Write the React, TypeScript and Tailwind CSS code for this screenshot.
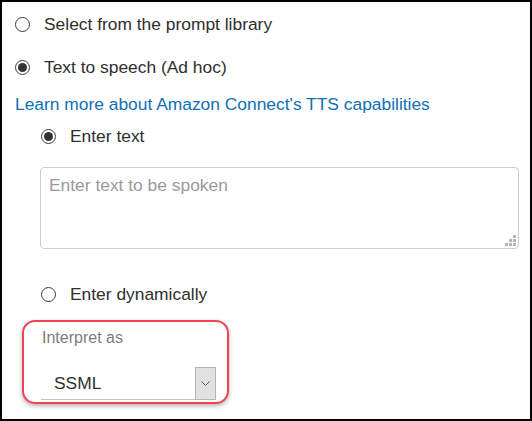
import * as React from "react";

/**
 * PromptSource — radio choices for a prompt, TTS text box and an
 * "Interpret as" select with a highlighted frame.
 */

function Radio({ checked = false }: { checked?: boolean }) {
  return (
    <span className="flex h-[15px] w-[15px] shrink-0 items-center justify-center rounded-full border border-[#3a3a3a] bg-white">
      {checked && <span className="h-[9px] w-[9px] rounded-full bg-[#333]" />}
    </span>
  );
}

function Option({ label, checked }: { label: string; checked?: boolean }) {
  return (
    <label className="flex h-[20px] items-center gap-[14px] leading-[20px]">
      <Radio checked={checked} />
      <span>{label}</span>
    </label>
  );
}

function ResizeGrip() {
  const cells = [
    [8, 0],
    [4, 4],
    [8, 4],
    [0, 8],
    [4, 8],
    [8, 8],
  ];
  return (
    <svg
      className="absolute bottom-[2px] right-[2px]"
      width="11"
      height="11"
      viewBox="0 0 11 11"
      aria-hidden="true"
    >
      {cells.map(([x, y], i) => (
        <rect key={i} x={x} y={y} width="3" height="3" fill="#b5b5b5" />
      ))}
    </svg>
  );
}

export default function App() {
  return (
    <div className="h-[421px] w-[532px] overflow-hidden border-2 border-black bg-white font-['Liberation_Sans',Arial,sans-serif] text-[17.4px] text-[#2f2f2f]">
      <div className="ml-[13px] mt-[12px]">
        <Option label="Select from the prompt library" />
      </div>
      <div className="ml-[13px] mt-[23px]">
        <Option label="Text to speech (Ad hoc)" checked />
      </div>
      <a
        href="#"
        className="ml-[13px] mt-[17px] block w-fit leading-[20px] text-[#0f6fb6]"
      >
        Learn more about Amazon Connect's TTS capabilities
      </a>
      <div className="ml-[39px] mt-[12px]">
        <Option label="Enter text" checked />
      </div>
      <div className="relative ml-[38px] mt-[21px] h-[82px] w-[479px] rounded-[4px] border border-[#cfcfcf] px-[8px] pt-[7px] leading-[20px] text-[#9a9a9a]">
        Enter text to be spoken
        <ResizeGrip />
      </div>
      <div className="ml-[39px] mt-[35px]">
        <Option label="Enter dynamically" />
      </div>
      <div className="ml-[20px] mt-[16px] h-[84px] w-[207px] rounded-[13px] border-2 border-[#ec4452] pl-[17px] pt-[6px] shadow-[0_2px_4px_rgba(0,0,0,0.3)]">
        <div className="ml-[1px] text-[16px] leading-[20px] text-[#7d7d7d]">
          Interpret as
        </div>
        <div className="mt-[19px] flex">
          <div className="flex h-[33px] w-[154px] items-center border-b border-[#c4c4c4] pl-[13px] leading-[20px]">
            SSML
          </div>
          <div className="flex h-[33px] w-[21px] items-center justify-center border border-[#b4b4b4] bg-[#e1e1e1]">
            <svg width="9" height="5" viewBox="0 0 9 5" aria-hidden="true">
              <path d="M0.5 0.5 L4.5 4.5 L8.5 0.5" fill="none" stroke="#555" strokeWidth="1" />
            </svg>
          </div>
        </div>
      </div>
    </div>
  );
}
